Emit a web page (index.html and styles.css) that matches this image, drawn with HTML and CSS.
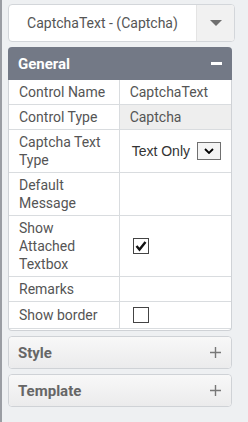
FILE: index.html
```html
<!DOCTYPE html>
<html lang="en">
<head>
  <meta charset="UTF-8">
  <meta name="viewport" content="width=device-width, initial-scale=1.0">
  <title>Properties</title>
  <link rel="stylesheet" href="styles.css">
</head>
<body>
  <div class="sidebar">
    <div class="picker">
      <span class="picker-text">CaptchaText - (Captcha)</span>
      <span class="picker-btn">
        <svg width="12" height="6" viewBox="0 0 12 6"><path d="M0 0 L12 0 L6 6 Z" fill="#6f6f6f"/></svg>
      </span>
    </div>

    <div class="panel open">
      <div class="panel-head">
        <span>General</span>
        <span class="minus"></span>
      </div>
      <div class="panel-body">
        <table class="props">
          <tr>
            <td class="label">Control Name</td>
            <td>CaptchaText</td>
          </tr>
          <tr>
            <td class="label">Control Type</td>
            <td class="readonly">Captcha</td>
          </tr>
          <tr>
            <td class="label">Captcha Text Type</td>
            <td>
              <span class="select">
                <span>Text Only</span>
                <span class="select-btn">
                  <svg width="10" height="6" viewBox="0 0 10 6"><path d="M1 1 L5 5 L9 1" fill="none" stroke="#000" stroke-width="1.8"/></svg>
                </span>
              </span>
            </td>
          </tr>
          <tr>
            <td class="label">Default Message</td>
            <td></td>
          </tr>
          <tr>
            <td class="label">Show Attached Textbox</td>
            <td>
              <span class="check">
                <svg width="14" height="14" viewBox="0 0 14 14"><path d="M2.5 7 L5.5 10.5 L11.5 3" fill="none" stroke="#111" stroke-width="2.4"/></svg>
              </span>
            </td>
          </tr>
          <tr>
            <td class="label">Remarks</td>
            <td></td>
          </tr>
          <tr>
            <td class="label">Show border</td>
            <td><span class="check"></span></td>
          </tr>
        </table>
      </div>
    </div>

    <div class="panel closed">
      <div class="panel-head">
        <span>Style</span>
        <svg class="plus" width="11" height="11" viewBox="0 0 11 11"><path d="M5.5 0 V11 M0 5.5 H11" stroke="#777" stroke-width="1.4"/></svg>
      </div>
    </div>

    <div class="panel closed">
      <div class="panel-head">
        <span>Template</span>
        <svg class="plus" width="11" height="11" viewBox="0 0 11 11"><path d="M5.5 0 V11 M0 5.5 H11" stroke="#777" stroke-width="1.4"/></svg>
      </div>
    </div>
  </div>
</body>
</html>
```

FILE: styles.css
```css
body {
  margin: 0;
  background-color: #eef0f2;
  font-family: Roboto, "Liberation Sans", sans-serif;
}
.sidebar {
  min-height: 422px;
  box-sizing: border-box;
  border-left: 2px solid #9a9da3;
  padding: 4px 13px 0 6px;
}
.picker {
  display: flex;
  height: 38px;
  box-sizing: border-box;
  border: 1px solid #d3d6da;
  border-radius: 4px;
  background-color: #fff;
  overflow: hidden;
}
.picker-text {
  flex: 1;
  display: flex;
  align-items: center;
  justify-content: center;
  font-size: 14px;
  color: #555;
}
.picker-btn {
  width: 37px;
  display: flex;
  align-items: center;
  justify-content: center;
  background-color: #f1f1f1;
  border-left: 1px solid #e4e4e4;
}
.panel {
  margin: 5px 3px 0 0;
  border: 1px solid #cfd2d6;
  border-radius: 4px;
  background-color: #fff;
}
.panel-head {
  display: flex;
  align-items: center;
  justify-content: space-between;
  font-size: 15px;
  font-weight: bold;
}
.open {
  border-top: none;
}
.open .panel-head {
  height: 33px;
  margin: 0 -1px;
  padding: 0 10px;
  border-radius: 4px 4px 0 0;
  background-color: #737986;
  color: #fff;
}
.minus {
  width: 11px;
  height: 3px;
  background-color: #fff;
}
.closed .panel-head {
  height: 31px;
  padding: 0 10px 0 9px;
  border-radius: 4px;
  background: linear-gradient(#f8f8f8, #ebebec);
  color: #666;
}
.panel-body {
  padding-bottom: 1px;
}
.props {
  width: 100%;
  border-collapse: collapse;
}
.props td {
  padding: 3px 10px;
  border-bottom: 1px solid #d9dcdf;
  font-size: 14px;
  line-height: 18px;
  color: #555;
  vertical-align: middle;
}
.props td.label {
  width: 91px;
  border-right: 1px solid #d9dcdf;
}
.props td.readonly {
  background-color: #eeeeee;
}
.select {
  display: inline-flex;
  align-items: center;
  gap: 7px;
  padding-left: 2px;
  white-space: nowrap;
  font-family: "Liberation Sans", Arial, sans-serif;
  font-size: 14px;
  color: #333;
}
.select-btn {
  width: 24px;
  height: 18px;
  box-sizing: border-box;
  display: flex;
  align-items: center;
  justify-content: center;
  border: 1px solid #707070;
  background-color: #f4f4f4;
}
.check {
  display: flex;
  align-items: center;
  justify-content: center;
  width: 16px;
  height: 16px;
  box-sizing: border-box;
  margin: 2px 3px;
  border: 1px solid #444;
  background-color: #fff;
}
```
